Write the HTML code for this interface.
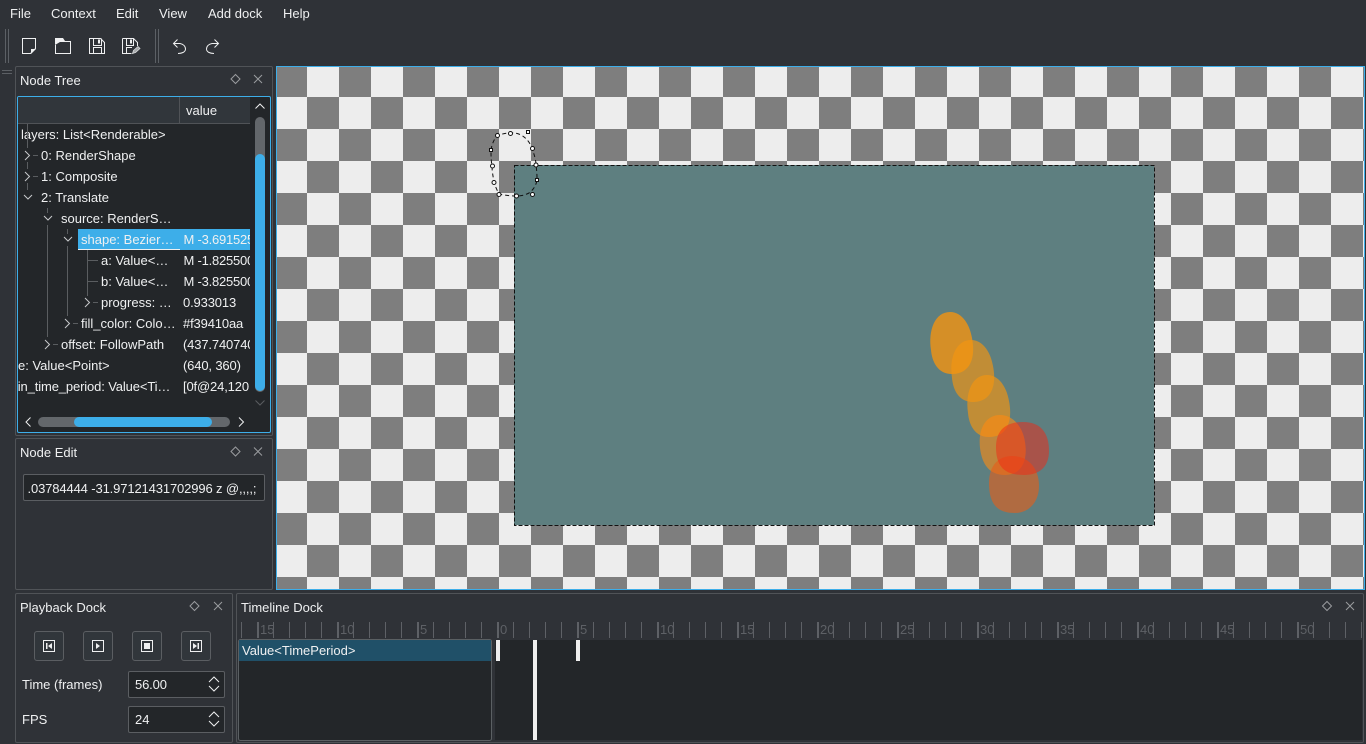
<!DOCTYPE html>
<html><head><meta charset="utf-8">
<style>
html,body{margin:0;padding:0;width:1366px;height:744px;overflow:hidden;background:#2f3237;}
body{font-family:"Liberation Sans",sans-serif;font-size:13px;color:#eff0f1;position:relative;}
.a{position:absolute;}
.t{position:absolute;white-space:nowrap;line-height:16px;}
.panel{position:absolute;border:1px solid #505357;border-radius:2px;box-sizing:border-box;}
.r{position:absolute;white-space:nowrap;line-height:16px;height:16px;}
.v{letter-spacing:-0.15px;}
.btn{position:absolute;width:30px;height:30px;top:631px;box-sizing:border-box;border:1px solid #5b5e62;border-radius:3px;background:#31363b;}
.spin{position:absolute;left:128px;width:97px;height:27px;box-sizing:border-box;border:1px solid #5b5e62;border-radius:2px;background:#232629;}
svg{position:absolute;left:0;top:0;}
</style></head><body>
<div class="t" style="left:10px;top:6px">File</div>
<div class="t" style="left:51px;top:6px">Context</div>
<div class="t" style="left:116px;top:6px">Edit</div>
<div class="t" style="left:159px;top:6px">View</div>
<div class="t" style="left:208px;top:6px">Add dock</div>
<div class="t" style="left:283px;top:6px">Help</div>

<div class="panel" style="left:15px;top:66px;width:258px;height:370px"></div>
<div class="panel" style="left:15px;top:438px;width:258px;height:152px"></div>
<div class="panel" style="left:15px;top:593px;width:218px;height:150px"></div>
<div class="panel" style="left:236px;top:593px;width:1128px;height:150px"></div>

<div class="t" style="left:20px;top:73px">Node Tree</div>
<div class="t" style="left:20px;top:445px">Node Edit</div>
<div class="t" style="left:20px;top:600px">Playback Dock</div>
<div class="t" style="left:241px;top:600px">Timeline Dock</div>

<!-- tree -->
<div class="a" style="left:17px;top:96px;width:254px;height:337px;box-sizing:border-box;border:1px solid #3daee9;border-radius:2px;background:#232629;overflow:hidden">
 <div class="a" style="left:0;top:0;width:232px;height:27px;background:#31363b;border-bottom:1px solid #505357;box-sizing:border-box"></div>
 <div class="a" style="left:161px;top:0;width:1px;height:27px;background:#505357"></div>
 <div class="t" style="left:168px;top:6px;color:#eff0f1">value</div>
 <div class="a" style="left:60px;top:132px;width:172px;height:21px;background:#3daee9"></div>
</div>
<div class="a" style="left:18px;top:124px;width:232px;height:280px;overflow:hidden">
 <div class="r" style="left:3px;top:3px">layers: List&lt;Renderable&gt;</div>
 <div class="r" style="left:23px;top:24px">0: RenderShape</div>
 <div class="r" style="left:23px;top:45px">1: Composite</div>
 <div class="r" style="left:23px;top:66px">2: Translate</div>
 <div class="r" style="left:43px;top:87px">source: RenderS…</div>
 <div class="r" style="left:63px;top:108px">shape: Bezier…</div>
 <div class="r" style="left:83px;top:129px">a: Value&lt;…</div>
 <div class="r" style="left:83px;top:150px">b: Value&lt;…</div>
 <div class="r" style="left:83px;top:171px">progress: …</div>
 <div class="r" style="left:63px;top:192px">fill_color: Colo…</div>
 <div class="r" style="left:43px;top:213px">offset: FollowPath</div>
 <div class="a" style="left:0;top:234px;width:150px;height:16px;overflow:hidden"><div class="r" style="left:0;top:0">e: Value&lt;Point&gt;</div></div>
 <div class="r" style="left:-18px;top:255px;letter-spacing:-.13px">main_time_period: Value&lt;Ti…</div>
 <div class="r v" style="left:165.500px;top:108px;letter-spacing:-.22px">M -3.691525</div>
 <div class="r v" style="left:165.500px;top:129px;letter-spacing:-.22px">M -1.825500</div>
 <div class="r v" style="left:165.500px;top:150px;letter-spacing:-.22px">M -3.825500</div>
 <div class="r v" style="left:165px;top:171px">0.933013</div>
 <div class="r v" style="left:165px;top:192px">#f39410aa</div>
 <div class="r v" style="left:165px;top:213px">(437.740740</div>
 <div class="r v" style="left:165px;top:234px">(640, 360)</div>
 <div class="r v" style="left:165px;top:255px">[0f@24,120</div>
</div>

<div class="a" style="left:23px;top:474px;width:242px;height:27px;box-sizing:border-box;border:1px solid #5b5e62;border-radius:2px;background:#232629;overflow:hidden">
 <div class="t" style="left:3.500px;top:6px;letter-spacing:-.13px">.03784444 -31.97121431702996 z @,,,,;</div>
</div>

<!-- canvas -->
<svg width="1366" height="744" style="pointer-events:none">
 <defs>
  <pattern id="ch" x="275" y="65" width="64" height="64" patternUnits="userSpaceOnUse">
   <rect width="64" height="64" fill="#ededed"/>
   <rect width="32" height="32" fill="#7e7e7e"/>
   <rect x="32" y="32" width="32" height="32" fill="#7e7e7e"/>
  </pattern>
  <path id="bl" d="M950 312C963 312 970 326 972 338C976 358 970 374 952 374C938 374 932 362 931 350C928 330 935 312 950 312Z"/>
 </defs>
 <rect x="276" y="66" width="1089" height="524" fill="url(#ch)"/>
 <rect x="276.500" y="66.500" width="1088" height="523" fill="none" stroke="#3daee9"/>
 <rect x="514" y="165" width="640" height="360" fill="#5e7f80"/>
 <rect x="514.500" y="165.500" width="640" height="360" fill="none" stroke="#111" stroke-dasharray="4 2"/>
 <use href="#bl" fill="#f39410" fill-opacity=".8"/>
 <use href="#bl" transform="translate(21 28)" fill="#f39410" fill-opacity=".667"/>
 <use href="#bl" transform="translate(37 63)" fill="#f39410" fill-opacity=".667"/>
 <path d="M1000 415C1014 415 1023 428 1025 442C1028 460 1022 475 1005 475C990 475 982 465 980 448C978 430 985 415 1000 415Z" fill="#ff8a10" fill-opacity=".6"/>
 <path d="M1012 456C1028 456 1039 468 1039 486C1039 503 1028 513 1015 513C998 513 989 505 989 483C989 466 998 456 1012 456Z" fill="#e85e18" fill-opacity=".6"/>
 <path d="M1023 422C1040 422 1049 432 1049 451C1049 468 1038 475 1024 475C1006 475 996 468 996 447C996 430 1006 422 1023 422Z" fill="#f22714" fill-opacity=".5"/>
 <!-- path overlay -->
 <path d="M491 150C492 143 495 138 497 136C501 134 506 133 510 133C520 132 528 138 532 148C534 154 536 160 536 165C537 172 537 176 537 180C536 186 533 190 529 193C525 195 521 196 517 196C510 196 504 195 499 194C497 190 495 186 494 182C493 176 492 171 492 166C491 160 491 155 491 150Z" fill="none" stroke="#111" stroke-width="1" stroke-dasharray="4 3"/>
 <g fill="#fff" stroke="#111" stroke-width="1">
  <circle cx="497.500" cy="135.500" r="2"/><circle cx="510.500" cy="133.500" r="2"/><rect x="526.500" y="130.500" width="3" height="3"/><circle cx="532.500" cy="148.500" r="2"/><circle cx="536" cy="165" r="2"/><rect x="535.500" y="178.500" width="3" height="3"/><circle cx="532.500" cy="194.500" r="2"/><circle cx="516.500" cy="196" r="2"/><circle cx="499" cy="194.500" r="2"/><circle cx="494" cy="182.500" r="2"/><circle cx="492.500" cy="166" r="2"/><rect x="489.500" y="148.500" width="3" height="3"/>
 </g>

 <!-- toolbar -->
 <g fill="#5c6065">
  <rect x="5" y="29" width="1" height="34"/><rect x="8" y="29" width="1" height="34"/>
  <rect x="155" y="29" width="1" height="34"/><rect x="158" y="29" width="1" height="34"/>
  <rect x="2" y="70" width="10" height="1"/><rect x="2" y="73" width="10" height="1"/>
 </g>
 <g fill="none" stroke="#eff0f1" stroke-width="1">
  <path d="M22.500 38.500H35.500V48.500L30.500 53.500H22.500Z"/>
  <path d="M55.500 45V53.500H70.500V41.500H64"/>
  <path d="M89.500 38.500H100.500L104.500 42.500V53.500H89.500Z"/>
  <path d="M93.500 38.500V45.500H101.500V38.500M93.500 53.500V47.500H101.500V53.500"/>
  <path d="M122.500 38.500H133.500L137.500 42.500V46M122.500 38.500V53.500H131.500M126.500 38.500V45.500H133.500V38.500M126.500 53.500V47.500H132"/>
  <path d="M173.500 43.500H180C183 44 185.500 46 185.500 49C185.500 52 182 53.500 178 53.500M177.500 39.500L173.500 43.500L177.500 47.500"/>
  <path d="M218.500 43.500H212C209 44 206.500 46 206.500 49C206.500 52 210 53.500 214 53.500M214.500 39.500L218.500 43.500L214.500 47.500"/>
 </g>
 <path d="M31 54V49H36Z" fill="#eff0f1"/>
 <path d="M55 38H63L65 41H71V42H60L55 45Z" fill="#eff0f1"/>
 <path d="M98 39.500h2v4h-2z" fill="#eff0f1"/>
 <path d="M130 39.500h2v4h-2z" fill="#eff0f1"/>
 <path d="M132.500 53.500L133.500 50.500L138 46.500L140 48.500L135.500 52.500Z" fill="#a8aaac" stroke="#d8dadc" stroke-width=".8"/>

 <!-- dock buttons -->
 <g fill="none" stroke="#9a9c9f" stroke-width="1">
  <path d="M231 79l4.500-4.500 4.500 4.500-4.500 4.500Z"/><path d="M254 75l8 8m0-8l-8 8"/>
  <path d="M231 451.500l4.500-4.500 4.500 4.500-4.500 4.500Z"/><path d="M254 447.500l8 8m0-8l-8 8"/>
  <path d="M190 606l4.500-4.500 4.500 4.500-4.500 4.500Z"/><path d="M214 602l8 8m0-8l-8 8"/>
  <path d="M1322.500 606l4.500-4.500 4.500 4.500-4.500 4.500Z"/><path d="M1346 602l8 8m0-8l-8 8"/>
 </g>

 <!-- tree lines -->
 <g stroke="#5a5d60" fill="none">
  <path d="M27.500 124V148M27.500 162V169M27.500 183V190M33 155.500H38M33 176.500H38M47.500 208V213M47.500 225V337M67.500 229V234M67.500 246V316M73 323.500H78M53 344.500H58M87.500 250V296M87.500 260.500H98M87.500 281.500H98M93 302.500H98"/>
 </g>
 <g fill="none" stroke="#c8cacc">
  <path d="M25 151l4.500 4.500L25 160M25 172l4.500 4.500L25 181M45 340l4.500 4.500L45 349M65 319l4.500 4.500L65 328M85 298l4.500 4.500L85 307"/>
  <path d="M24 195l4 4 4-4M44 216l4 4 4-4M64 237l4 4 4-4"/>
 </g>
 <rect x="78" y="249" width="102" height="1" fill="#eff0f1"/>

 <!-- scrollbars -->
 <rect x="255" y="117" width="10" height="275" rx="5" fill="#63676b"/>
 <path d="M255 159a5 5 0 0 1 10 0V386a5 5 0 0 1-5 5a5 5 0 0 1-5-5Z" fill="#3daee9"/>
 <path d="M255.500 108.500l4.500-4.500 4.500 4.500" stroke="#eff0f1" fill="none"/>
 <path d="M255.500 400.500l4.500 4.500 4.500-4.500" stroke="#5a5d60" fill="none"/>
 <rect x="38" y="417" width="192" height="10" rx="5" fill="#63676b"/>
 <rect x="74" y="417" width="138" height="10" rx="5" fill="#3daee9"/>
 <path d="M30.500 417.500l-4.500 4.500 4.500 4.500M239 417.500l4.500 4.500-4.500 4.500" stroke="#eff0f1" fill="none"/>

 <!-- ruler -->
 <g stroke="#5e6166">
  <path d="M241.500 622V638M273.500 622V638M289.500 622V638M305.500 622V638M321.500 622V638M353.500 622V638M369.500 622V638M385.500 622V638M401.500 622V638M433.500 622V638M449.500 622V638M465.500 622V638M481.500 622V638M513.500 622V638M529.500 622V638M545.500 622V638M561.500 622V638M593.500 622V638M609.500 622V638M625.500 622V638M641.500 622V638M673.500 622V638M689.500 622V638M705.500 622V638M721.500 622V638M753.500 622V638M769.500 622V638M785.500 622V638M801.500 622V638M833.500 622V638M849.500 622V638M865.500 622V638M881.500 622V638M913.500 622V638M929.500 622V638M945.500 622V638M961.500 622V638M993.500 622V638M1009.500 622V638M1025.500 622V638M1041.500 622V638M1073.500 622V638M1089.500 622V638M1105.500 622V638M1121.500 622V638M1153.500 622V638M1169.500 622V638M1185.500 622V638M1201.500 622V638M1233.500 622V638M1249.500 622V638M1265.500 622V638M1281.500 622V638M1313.500 622V638M1329.500 622V638M1345.500 622V638M1361.500 622V638"/>
 </g>
 <g fill="#5e6166">
  <rect x="257" y="622" width="2" height="16"/><rect x="337" y="622" width="2" height="16"/><rect x="417" y="622" width="2" height="16"/><rect x="497" y="622" width="2" height="16"/><rect x="577" y="622" width="2" height="16"/><rect x="657" y="622" width="2" height="16"/><rect x="737" y="622" width="2" height="16"/><rect x="817" y="622" width="2" height="16"/><rect x="897" y="622" width="2" height="16"/><rect x="977" y="622" width="2" height="16"/><rect x="1057" y="622" width="2" height="16"/><rect x="1137" y="622" width="2" height="16"/><rect x="1217" y="622" width="2" height="16"/><rect x="1297" y="622" width="2" height="16"/>
 </g>

 <!-- timeline -->
 <rect x="495" y="640" width="867" height="100" fill="#232629"/>
 <rect x="238.500" y="639.500" width="253" height="101" rx="2" fill="#232629" stroke="#5b6063"/>
 <rect x="239" y="640" width="252" height="21" fill="#205068"/>
 <rect x="496" y="640" width="4" height="21" fill="#eeeeee"/>
 <rect x="533" y="640" width="4" height="100" fill="#eeeeee"/>
 <rect x="576" y="640" width="4" height="21" fill="#eeeeee"/>
</svg>

<div class="t" style="left:260px;top:622px;color:#5e6166">15</div>
<div class="t" style="left:340px;top:622px;color:#5e6166">10</div>
<div class="t" style="left:420px;top:622px;color:#5e6166">5</div>
<div class="t" style="left:500px;top:622px;color:#5e6166">0</div>
<div class="t" style="left:580px;top:622px;color:#5e6166">5</div>
<div class="t" style="left:660px;top:622px;color:#5e6166">10</div>
<div class="t" style="left:740px;top:622px;color:#5e6166">15</div>
<div class="t" style="left:820px;top:622px;color:#5e6166">20</div>
<div class="t" style="left:900px;top:622px;color:#5e6166">25</div>
<div class="t" style="left:980px;top:622px;color:#5e6166">30</div>
<div class="t" style="left:1060px;top:622px;color:#5e6166">35</div>
<div class="t" style="left:1140px;top:622px;color:#5e6166">40</div>
<div class="t" style="left:1220px;top:622px;color:#5e6166">45</div>
<div class="t" style="left:1300px;top:622px;color:#5e6166">50</div>
<div class="t" style="left:242px;top:643px">Value&lt;TimePeriod&gt;</div>

<div class="btn" style="left:34px"></div><div class="btn" style="left:83px"></div><div class="btn" style="left:132px"></div><div class="btn" style="left:181px"></div>
<svg width="1366" height="744">
 <g fill="none" stroke="#eff0f1">
  <rect x="43.500" y="640.500" width="11" height="11"/><rect x="92.500" y="640.500" width="11" height="11"/><rect x="141.500" y="640.500" width="11" height="11"/><rect x="190.500" y="640.500" width="11" height="11"/>
 </g>
 <g fill="#eff0f1">
  <path d="M46 643h1.500v6H46ZM52 643v6l-4-3Z"/>
  <path d="M96 643l4 3-4 3Z"/>
  <rect x="144" y="643" width="6" height="6"/>
  <path d="M193 643l4 3-4 3ZM197.500 643H199v6h-1.500Z"/>
 </g>
</svg>
<div class="t" style="left:22px;top:677px">Time (frames)</div>
<div class="t" style="left:22px;top:712px">FPS</div>
<div class="spin" style="top:671px"></div>
<div class="spin" style="top:706px"></div>
<div class="t" style="left:135px;top:677px;letter-spacing:-.15px">56.00</div>
<div class="t" style="left:135px;top:712px">24</div>
<svg width="1366" height="744">
 <path d="M209 682l5-5 5 5M209 686l5 5 5-5M209 717l5-5 5 5M209 721l5 5 5-5" fill="none" stroke="#eff0f1"/>
</svg>
</body></html>
